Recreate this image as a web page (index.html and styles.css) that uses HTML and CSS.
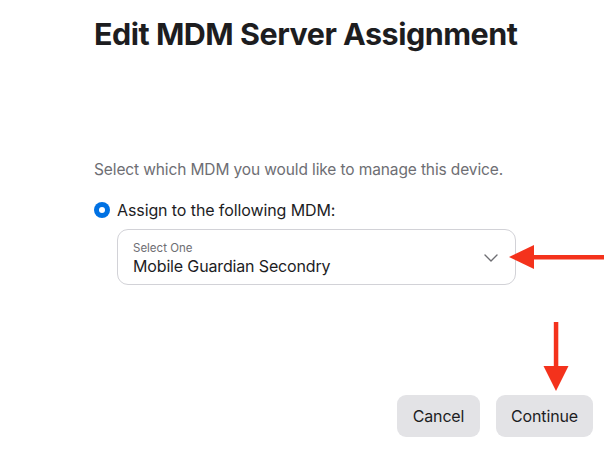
FILE: index.html
```html
<!DOCTYPE html>
<html lang="en">
<head>
<meta charset="utf-8">
<title>Edit MDM Server Assignment</title>
<link rel="stylesheet" href="styles.css">
</head>
<body>
<main class="sheet">
  <h1 class="title">Edit MDM Server Assignment</h1>
  <p class="lead">Select which MDM you would like to manage this device.</p>
  <label class="option">
    <span class="radio"><span class="radio-dot"></span></span>
    <span class="option-label">Assign to the following MDM:</span>
  </label>
  <div class="select-row">
    <div class="select">
      <div class="select-text">
        <span class="select-caption">Select One</span>
        <span class="select-value">Mobile Guardian Secondry</span>
      </div>
      <svg class="chevron" width="14" height="8" viewBox="0 0 14 8" aria-hidden="true">
        <path d="M1 1 L7 7 L13 1" fill="none" stroke="#6e6e73" stroke-width="1.4" stroke-linecap="round" stroke-linejoin="round"/>
      </svg>
    </div>
    <svg class="arrow-left" width="96" height="26" viewBox="0 0 96 26" aria-hidden="true">
      <polygon points="0,13 25,1 25,25" fill="#f4321c"/>
      <rect x="24" y="11" width="71" height="4.5" fill="#f4321c"/>
    </svg>
  </div>
  <div class="actions">
    <svg class="arrow-down" width="26" height="70" viewBox="0 0 26 70" aria-hidden="true">
      <rect x="10.8" y="0" width="4.5" height="46" fill="#f4321c"/>
      <polygon points="0.5,44 25.5,44 13,69" fill="#f4321c"/>
    </svg>
    <div class="buttons">
      <button class="btn btn-cancel" type="button">Cancel</button>
      <button class="btn btn-continue" type="button">Continue</button>
    </div>
  </div>
</main>
</body>
</html>
```

FILE: styles.css
```css
html, body {
  margin: 0;
  padding: 0;
  background: #ffffff;
}

body {
  font-family: Inter, "Noto Sans", "Liberation Sans", sans-serif;
  color: #1d1d1f;
  width: 611px;
  height: 461px;
  overflow: hidden;
}

.sheet {
  display: flex;
  flex-direction: column;
  padding: 14px 0 0 94px;
}

.title {
  margin: 0;
  font-size: 30.5px;
  font-weight: 700;
  letter-spacing: -0.5px;
  line-height: 40px;
  color: #1d1d1f;
}

.lead {
  margin: 106px 0 0 0;
  font-size: 15.5px;
  line-height: 20px;
  color: #6e6e73;
  letter-spacing: -0.12px;
}

.option {
  display: flex;
  align-items: center;
  gap: 7px;
  margin-top: 20px;
}

.radio {
  width: 16px;
  height: 16px;
  border-radius: 50%;
  background: #0071e3;
  display: flex;
  align-items: center;
  justify-content: center;
}

.radio-dot {
  width: 6px;
  height: 6px;
  border-radius: 50%;
  background: #ffffff;
}

.option-label {
  font-size: 16px;
  line-height: 20px;
  color: #1d1d1f;
  letter-spacing: -0.1px;
}

.select-row {
  display: flex;
  align-items: center;
  margin: 9px 0 0 23px;
}

.select {
  box-sizing: border-box;
  width: 399px;
  height: 56px;
  border: 1px solid #d2d2d7;
  border-radius: 11px;
  display: flex;
  align-items: center;
  justify-content: space-between;
  padding: 0 17px 0 15px;
}

.select-text {
  display: flex;
  flex-direction: column;
  padding-top: 3px;
  gap: 1px;
}

.select-caption {
  font-size: 11.5px;
  line-height: 14px;
  color: #6e6e73;
}

.select-value {
  font-size: 16px;
  line-height: 21px;
  color: #1d1d1f;
  letter-spacing: -0.15px;
}

.chevron {
  margin-top: 2px;
}

.arrow-left {
  margin-left: -7px;
}

.actions {
  display: flex;
  flex-direction: column;
  align-items: flex-end;
  width: 499px;
  margin-top: 37px;
}

.arrow-down {
  margin-right: 24px;
}

.buttons {
  display: flex;
  gap: 16px;
  margin-top: 3px;
}

.btn {
  font-family: inherit;
  font-size: 16px;
  color: #1d1d1f;
  background: #e3e3e6;
  border: none;
  border-radius: 9px;
  height: 42px;
  padding: 0;
  letter-spacing: -0.15px;
}

.btn-cancel {
  width: 83px;
}

.btn-continue {
  width: 97px;
}
```
